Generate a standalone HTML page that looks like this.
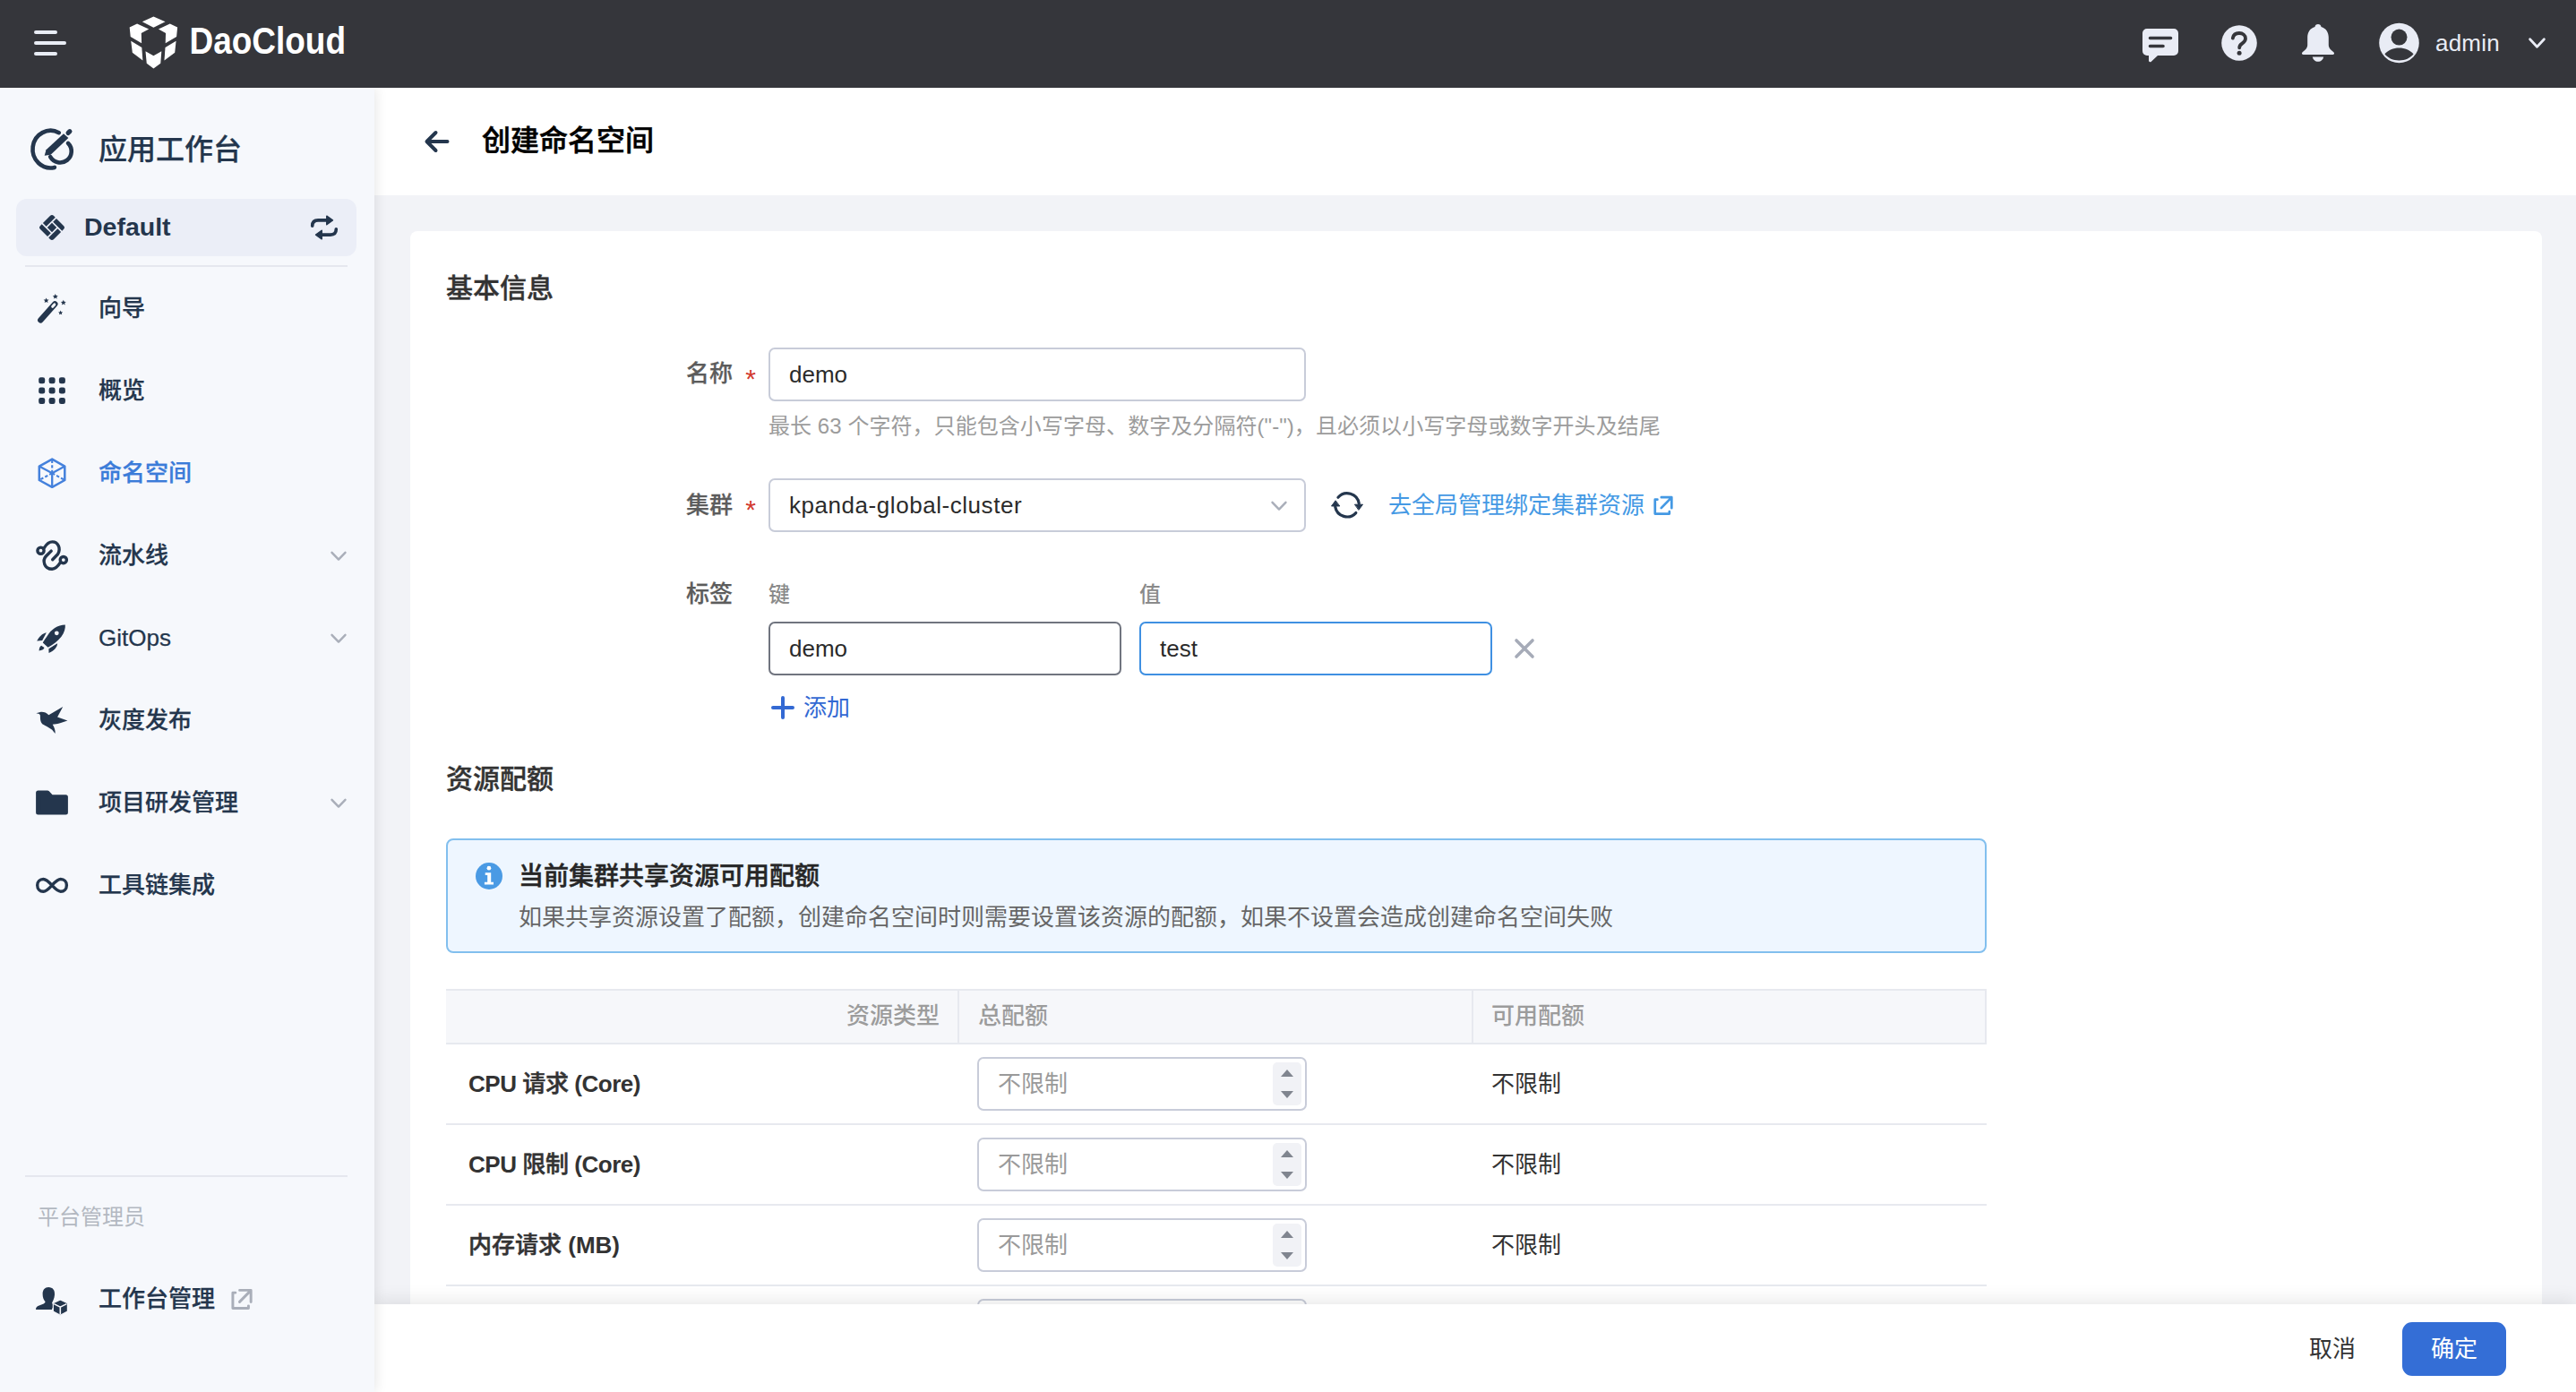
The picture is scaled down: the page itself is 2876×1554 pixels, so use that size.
<!DOCTYPE html>
<html lang="zh-CN">
<head>
<meta charset="utf-8">
<title>创建命名空间 - 应用工作台</title>
<style>
*{box-sizing:border-box;margin:0;padding:0}
html,body{width:2876px;height:1554px;overflow:hidden;background:#f2f3f7}
body{position:relative;font-family:"Liberation Sans","Noto Sans CJK SC",sans-serif;font-size:26px;color:#333;-webkit-font-smoothing:antialiased}
.abs{position:absolute}
.t{position:absolute;white-space:nowrap;line-height:40px;height:40px}
svg{position:absolute;overflow:visible}

/* header */
#hd{position:absolute;left:0;top:0;width:2876px;height:98px;background:#35363b}
#hd .bar{position:absolute;height:4px;border-radius:2px;background:#e9edf5;left:38px}

/* sidebar */
#sb{position:absolute;left:0;top:98px;width:418px;height:1456px;background:#f6f8fc;box-shadow:0 0 14px rgba(0,0,0,.12)}
#sb .nav{color:#24364d;font-weight:500;font-size:26px;left:110px;-webkit-text-stroke-width:.25px}
#sb .sep{position:absolute;left:28px;width:360px;height:2px;background:#e5e7ee}
#ws{position:absolute;left:18px;top:124px;width:380px;height:64px;border-radius:12px;background:#ebeef7}

/* main */
#ph{position:absolute;left:418px;top:98px;width:2458px;height:120px;background:#fff}
#card{position:absolute;left:458px;top:258px;width:2380px;height:1400px;background:#fff;border-radius:8px}
.inp{position:absolute;height:60px;border:2px solid #c8ccd9;border-radius:7px;background:#fff}
.inp .v{position:absolute;left:21px;top:8px;line-height:40px;font-size:26px;color:#2b2b2b;white-space:nowrap}
.lbl{font-weight:500;color:#5c5c5c;font-size:26px;-webkit-text-stroke-width:.25px}
.star{position:absolute;color:#d23a2f;font-size:30px;line-height:40px;width:12px;text-align:center}
.inp .ph{color:#9a9a9a}
.th{font-size:26px;font-weight:500;color:#9c9c9c}
.rowline{position:absolute;left:498px;width:1720px;height:2px;background:#e7e9ef}
.spin{position:absolute;right:4px;top:4px;width:32px;height:48px;border-radius:5px;background:#f1f2f6}
.spin i{position:absolute;left:8.700px;width:0;height:0;border-left:7.300px solid transparent;border-right:7.300px solid transparent}
.spin i.u{top:8px;border-bottom:8px solid #80858f}
.spin i.d{top:32px;border-top:8px solid #80858f}
.rl{font-weight:700;color:#333;font-size:26px;left:523px}
.rl.c{letter-spacing:-.45px}
.cj{font-weight:500;-webkit-text-stroke:.5px #333}

#ft{position:absolute;left:418px;top:1456px;width:2458px;height:98px;background:#fff;box-shadow:0 -5px 18px rgba(0,0,0,.085)}
</style>
</head>
<body>

<!-- ================= MAIN ================= -->
<div id="ph"></div>
<div id="card"></div>
<div id="main">
<svg style="left:474px;top:145px" width="28" height="26" viewBox="0 0 28 26" fill="none" stroke="#24364d" stroke-width="4" stroke-linecap="round" stroke-linejoin="round"><path d="M25.500 13H3.500M12.500 3l-10 10 10 10"/></svg>
<div class="t " style="left:538px;top:133px;line-height:48px;height:48px;font-size:32px;font-weight:500;-webkit-text-stroke:.55px #000;color:#000">创建命名空间</div>
<div class="t " style="left:498px;top:300px;line-height:44px;height:44px;font-size:30px;font-weight:500;-webkit-text-stroke-width:.4px;color:#333">基本信息</div>
<div class="t lbl" style="right:2058px;top:397px;line-height:40px;height:40px;">名称</div>
<div class="star" style="left:832px;top:403px">*</div>
<div class="inp" style="left:858px;top:388px;width:600px"><span class="v">demo</span></div>
<div class="t " style="left:858px;top:456px;line-height:40px;height:40px;font-size:24px;letter-spacing:.06px;color:#9c9c9c">最长 63 个字符，只能包含小写字母、数字及分隔符("-")，且必须以小写字母或数字开头及结尾</div>
<div class="t lbl" style="right:2058px;top:543.5px;line-height:40px;height:40px;">集群</div>
<div class="star" style="left:832px;top:549px">*</div>
<div class="inp" style="left:858px;top:534px;width:600px"><span class="v" style="letter-spacing:.55px">kpanda-global-cluster</span><svg style="left:559px;top:23px" width="18" height="12" viewBox="0 0 18 12"><path fill="none" stroke="#a9aeb9" stroke-width="2.400" stroke-linecap="round" stroke-linejoin="round" d="M1.500 1.800l7.500 7.800 7.500-7.800"/></svg></div>
<svg style="left:1484px;top:544px" width="40" height="40" viewBox="-20 -20 40 40" fill="none" stroke="#24364d" stroke-width="3.200" stroke-linecap="round">
<path d="M-10.060 -8.800A13.400 13.400 0 0 1 13.250 -1.900"/><path d="M9.800 8.550A13.400 13.400 0 0 1 -13.250 1.900"/>
<path fill="#24364d" stroke="#24364d" stroke-width="1" stroke-linejoin="round" d="M8.800 -.8h8.700L13.100 5.100z"/><path fill="#24364d" stroke="#24364d" stroke-width="1" stroke-linejoin="round" d="M-8.600 1h-8.900L-13.100 -4.900z"/></svg>
<div class="t " style="left:1550px;top:543.5px;line-height:40px;height:40px;color:#4499e4">去全局管理绑定集群资源</div>
<svg style="left:1846px;top:553px" width="22" height="22" viewBox="0 0 22 22" fill="none" stroke="#4499e4" stroke-width="2.700" stroke-linecap="round" stroke-linejoin="round"><path d="M4.400 4.700H1.750V20.600H17.800V18.200"/><path d="M8.700 14.100L20.200 2.400M8.800 2.200H20.300V14.200"/></svg>
<div class="t lbl" style="right:2058px;top:643px;line-height:40px;height:40px;">标签</div>
<div class="t " style="left:858px;top:644px;line-height:40px;height:40px;font-size:24px;font-weight:500;color:#8a8a8a">键</div>
<div class="t " style="left:1272px;top:644px;line-height:40px;height:40px;font-size:24px;font-weight:500;color:#8a8a8a">值</div>
<div class="inp" style="left:858px;top:694px;width:394px;border-color:#70747f"><span class="v">demo</span></div>
<div class="inp" style="left:1272px;top:694px;width:394px;border-color:#3f90e2"><span class="v">test</span></div>
<svg style="left:1691px;top:713px" width="22" height="22" viewBox="0 0 22 22"><path d="M2 2l18 18M20 2L2 20" stroke="#a6abb8" stroke-width="3.600" stroke-linecap="round"/></svg>
<svg style="left:861px;top:777px" width="26" height="26" viewBox="0 0 26 26"><path d="M13 2v22M2 13h22" stroke="#3369d3" stroke-width="4" stroke-linecap="round"/></svg>
<div class="t " style="left:897px;top:770px;line-height:40px;height:40px;color:#3369d3">添加</div>
<div class="t " style="left:498px;top:848px;line-height:44px;height:44px;font-size:30px;font-weight:500;-webkit-text-stroke-width:.4px;color:#333">资源配额</div>
<div class="abs" style="left:498px;top:936px;width:1720px;height:128px;border:2px solid #82bfee;border-radius:8px;background:#eef6ff"></div>
<svg style="left:531px;top:963px" width="30" height="30" viewBox="0 0 30 30"><circle cx="15" cy="15" r="15" fill="#4a9ae4"/><circle cx="14.900" cy="6.200" r="2.350" fill="#fff"/><path d="M10.700 11.200h6.500v10.500h2.800v2.700H9.900v-2.700h3.300v-7.800h-2.500z" fill="#fff"/></svg>
<div class="t " style="left:579px;top:957.5px;line-height:42px;height:42px;font-size:28px;font-weight:500;-webkit-text-stroke:.5px #262626;color:#262626">当前集群共享资源可用配额</div>
<div class="t " style="left:579px;top:1003.5px;line-height:40px;height:40px;color:#666">如果共享资源设置了配额，创建命名空间时则需要设置该资源的配额，如果不设置会造成创建命名空间失败</div>
<div class="abs" style="left:498px;top:1104px;width:1720px;height:62px;background:#f6f7fa;border-top:2px solid #e7e9ef;border-bottom:2px solid #e7e9ef;border-right:2px solid #e7e9ef"></div>
<div class="abs" style="left:1069px;top:1106px;width:2px;height:58px;background:#e7e9ef"></div>
<div class="abs" style="left:1643px;top:1106px;width:2px;height:58px;background:#e7e9ef"></div>
<div class="t th" style="right:1827px;top:1114px;line-height:40px;height:40px;">资源类型</div>
<div class="t th" style="left:1092px;top:1114px;line-height:40px;height:40px;">总配额</div>
<div class="t th" style="left:1665px;top:1114px;line-height:40px;height:40px;">可用配额</div>
<div class="t rl c" style="left:523px;top:1190px;line-height:40px;height:40px;">CPU <span class="cj">请求</span> (Core)</div>
<div class="inp" style="left:1091px;top:1180px;width:368px"><span class="v ph">不限制</span><div class="spin"><i class="u"></i><i class="d"></i></div></div>
<div class="t " style="left:1665px;top:1190px;line-height:40px;height:40px;color:#333">不限制</div>
<div class="rowline" style="top:1254px"></div>
<div class="t rl c" style="left:523px;top:1280px;line-height:40px;height:40px;">CPU <span class="cj">限制</span> (Core)</div>
<div class="inp" style="left:1091px;top:1270px;width:368px"><span class="v ph">不限制</span><div class="spin"><i class="u"></i><i class="d"></i></div></div>
<div class="t " style="left:1665px;top:1280px;line-height:40px;height:40px;color:#333">不限制</div>
<div class="rowline" style="top:1344px"></div>
<div class="t rl" style="left:523px;top:1370px;line-height:40px;height:40px;"><span class="cj">内存请求</span> (MB)</div>
<div class="inp" style="left:1091px;top:1360px;width:368px"><span class="v ph">不限制</span><div class="spin"><i class="u"></i><i class="d"></i></div></div>
<div class="t " style="left:1665px;top:1370px;line-height:40px;height:40px;color:#333">不限制</div>
<div class="rowline" style="top:1434px"></div>
<div class="t rl" style="left:523px;top:1460px;line-height:40px;height:40px;"><span class="cj">内存限制</span> (MB)</div>
<div class="inp" style="left:1091px;top:1450px;width:368px"><span class="v ph">不限制</span><div class="spin"><i class="u"></i><i class="d"></i></div></div>
<div class="t " style="left:1665px;top:1460px;line-height:40px;height:40px;color:#333">不限制</div>
<div class="rowline" style="top:1524px"></div>
</div>
<div id="ft">
  <div class="t" style="left:2160px;top:30px;color:#333">取消</div>
  <div class="abs" style="left:2264px;top:20px;width:116px;height:60px;border-radius:11px;background:#346ed6"></div>
  <div class="t" style="left:2264px;top:30px;width:116px;text-align:center;color:#fff">确定</div>
</div>

<!-- ================= SIDEBAR ================= -->
<div id="sb">
  <!-- title icon -->
  <svg style="left:34px;top:46px" width="48" height="48" viewBox="0 0 48 48" fill="none" stroke="#24364d" stroke-width="4.600" stroke-linecap="round">
    <path d="M31.800 4.200A20 20.800 0 1 0 26.900 42.900"/>
    <path d="M42 15.900A12.600 12.600 0 1 1 22.200 31.100"/>
    <path stroke="none" fill="#24364d" d="M37 5.200L17.500 23.200 15.700 29.700 22.600 28.700 42.400 10z"/>
    <path stroke-width="5.200" d="M42.100 4.400L43.900 2.700"/>
  </svg>
  <div class="t" style="left:110px;top:45px;font-size:32px;font-weight:500;-webkit-text-stroke-width:.25px;color:#24364d;line-height:48px;height:48px">应用工作台</div>
  <div id="ws">
    <svg style="left:25px;top:17px" width="30" height="30" viewBox="-15 -15 30 30"><g transform="scale(-1 1) rotate(45)" fill="#24364d">
      <path d="M-10.650 -7.650a3 3 0 0 1 3-3H3.650v5.300H-10.650z"/>
      <path d="M7.650 -10.650a3 3 0 0 1 3 3V3.650H5.350V-10.650z"/>
      <path d="M10.650 7.650a3 3 0 0 1-3 3H-3.650V5.350H10.650z"/>
      <path d="M-7.650 10.650a3 3 0 0 1-3-3V-3.650h5.300V10.650z"/>
      <rect x="-3.650" y="-3.650" width="7.300" height="7.300"/>
    </g></svg>
    <div class="t" style="left:76px;top:11px;font-size:28.500px;font-weight:700;color:#24364d">Default</div>
    <svg style="left:328px;top:18px" width="32" height="28" viewBox="0 0 32 28" fill="none" stroke="#24364d" stroke-width="3.600" stroke-linecap="round" stroke-linejoin="round">
      <path d="M2.700 12.200c0-4.200 2.200-6.300 6.400-6.300h10"/>
      <path fill="#24364d" stroke-width="1.500" d="M18.800 1.200l6.600 4.700-6.600 4.800z"/>
      <path d="M29.300 15.800c0 4.200-2.200 6.300-6.400 6.300h-10"/>
      <path fill="#24364d" stroke-width="1.500" d="M13.200 17.300l-6.600 4.800 6.600 4.700z"/>
    </svg>
  </div>
  <div class="sep" style="top:198px"></div>
  <div class="t nav" style="top:226px;color:#24364d">向导</div>
  <div class="t nav" style="top:318px;color:#24364d">概览</div>
  <div class="t nav" style="top:410px;color:#3b7cd9">命名空间</div>
  <div class="t nav" style="top:502px;color:#24364d">流水线</div>
  <div class="t nav" style="top:594px;color:#24364d">GitOps</div>
  <div class="t nav" style="top:686px;color:#24364d">灰度发布</div>
  <div class="t nav" style="top:778px;color:#24364d">项目研发管理</div>
  <div class="t nav" style="top:870px;color:#24364d">工具链集成</div>
  <svg style="left:369px;top:517px" width="18" height="12" viewBox="0 0 18 12"><path fill="none" stroke="#a9aeb9" stroke-width="2.400" stroke-linecap="round" stroke-linejoin="round" d="M1.500 1.800l7.500 7.800 7.500-7.800"/></svg>
  <svg style="left:369px;top:609px" width="18" height="12" viewBox="0 0 18 12"><path fill="none" stroke="#a9aeb9" stroke-width="2.400" stroke-linecap="round" stroke-linejoin="round" d="M1.500 1.800l7.500 7.800 7.500-7.800"/></svg>
  <svg style="left:369px;top:793px" width="18" height="12" viewBox="0 0 18 12"><path fill="none" stroke="#a9aeb9" stroke-width="2.400" stroke-linecap="round" stroke-linejoin="round" d="M1.500 1.800l7.500 7.800 7.500-7.800"/></svg>
  <svg style="left:0;top:0" width="100" height="1000" viewBox="0 98 100 1000">
    <path d="M45.3 357.4 L61.3 339.3" stroke="#24364d" stroke-width="6.400" stroke-linecap="round"/>
    <path d="M58.7 342.3 L60.8 339.9" stroke="#f6f7fb" stroke-width="3" stroke-linecap="round"/>
    <path transform="translate(51.6 335.5) scale(1.00)" d="M0 -3.100L.9 -1 3 -.9 1.400 .5 1.900 2.600 0 1.500 -1.900 2.600 -1.400 .5 -3 -.9 -.9 -1z" fill="#24364d"/>
    <path transform="translate(61.8 331.0) scale(1.00)" d="M0 -3.100L.9 -1 3 -.9 1.400 .5 1.900 2.600 0 1.500 -1.900 2.600 -1.400 .5 -3 -.9 -.9 -1z" fill="#24364d"/>
    <path transform="translate(70.8 337.8) scale(1.00)" d="M0 -3.100L.9 -1 3 -.9 1.400 .5 1.900 2.600 0 1.500 -1.900 2.600 -1.400 .5 -3 -.9 -.9 -1z" fill="#24364d"/>
    <path transform="translate(67.6 349.1) scale(0.85)" d="M0 -3.100L.9 -1 3 -.9 1.400 .5 1.900 2.600 0 1.500 -1.900 2.600 -1.400 .5 -3 -.9 -.9 -1z" fill="#24364d"/>
    <rect x="43.2" y="421.3" width="7" height="7" rx="2.300" fill="#24364d"/>
    <rect x="54.6" y="421.3" width="7" height="7" rx="2.300" fill="#24364d"/>
    <rect x="65.9" y="421.3" width="7" height="7" rx="2.300" fill="#24364d"/>
    <rect x="43.2" y="432.6" width="7" height="7" rx="2.300" fill="#24364d"/>
    <rect x="54.6" y="432.6" width="7" height="7" rx="2.300" fill="#24364d"/>
    <rect x="65.9" y="432.6" width="7" height="7" rx="2.300" fill="#24364d"/>
    <rect x="43.2" y="444.0" width="7" height="7" rx="2.300" fill="#24364d"/>
    <rect x="54.6" y="444.0" width="7" height="7" rx="2.300" fill="#24364d"/>
    <rect x="65.9" y="444.0" width="7" height="7" rx="2.300" fill="#24364d"/>
    <path d="M58.2 512.6 L72.3 520.6 L72.3 536.0 L58.2 543.8 L43.8 536.0 L43.8 520.6 Z" fill="none" stroke="#4481dc" stroke-width="2.500" stroke-linejoin="round"/>
    <path d="M43.8 520.6 L58.2 528.2 L72.3 520.6 M58.2 528.2 L58.2 543.8" stroke="#4481dc" stroke-width="2.300" fill="none"/>
    <path d="M58.2 528.2 L58.2 512.6 M58.2 528.2 L43.8 536.0 M58.2 528.2 L72.3 536.0" stroke="#4481dc" stroke-width="2.100" stroke-dasharray="3.400 2.200" fill="none"/>
    <circle cx="45.5" cy="614.7" r="3.600" fill="none" stroke="#24364d" stroke-width="3.400"/>
    <circle cx="70.8" cy="625.1" r="3.600" fill="none" stroke="#24364d" stroke-width="3.400"/>
    <path d="M49.3 611.6 C52.4 606.7 55.9 604.9 58.5 604.9 C64.5 604.9 68.5 611.8 64.5 618.7 L58.7 624.7" fill="none" stroke="#24364d" stroke-width="3.400" stroke-linecap="round"/>
    <path d="M57.2 615.1 L51.3 621.0 C47.2 625.6 49.0 635.1 58.2 635.3 C61.6 635.1 64.5 632.5 67.4 627.9" fill="none" stroke="#24364d" stroke-width="3.400" stroke-linecap="round"/>
    <path fill="#24364d" d="M72.8 697.5 C64.5 697.8 57.0 702.4 52.4 710.5 C50.1 713.9 48.4 716.2 47.8 717.4 L53.6 722.8 C59.3 719.7 64.5 715.6 68.5 710.8 C72.0 705.9 73.1 701.3 72.8 697.5 Z"/>
    <circle cx="63.3" cy="706.8" r="2.400" fill="#f6f7fb"/>
    <path fill="#24364d" d="M51.8 706.2 C47.2 707.0 43.8 711.0 41.1 715.6 L47.2 715.1 Z"/>
    <path fill="#24364d" d="M64.1 718.3 C63.9 723.1 60.1 726.6 54.5 728.9 L54.4 724.3 Z"/>
    <path fill="#24364d" d="M46.1 720.8 C43.8 722.5 43.8 724.8 43.6 726.6 C46.1 726.2 49.0 725.4 49.5 723.1 Z"/>
    <path fill="#24364d" d="M40.3 796.3 L44.9 794.9 C48.4 794.4 51.8 795.5 54.4 798.2 L70.2 789.0 L64.1 800.5 L75.4 804.5 L67.9 807.0 C64.5 808.2 61.0 808.5 58.7 808.7 C60.8 812.2 62.0 815.6 61.6 819.1 L58.2 814.7 C54.7 812.2 50.7 809.9 47.2 808.2 C44.9 805.9 44.9 802.4 44.9 799.5 C44.9 797.8 44.7 797.0 40.3 796.3 Z"/>
    <path fill="#24364d" stroke="#24364d" stroke-width="5" stroke-linejoin="round" d="M42.6 885.1 L53.0 885.1 L57.4 889.7 L73.4 889.7 L73.4 907.1 L42.6 907.1 Z"/>
    <path fill="none" stroke="#24364d" stroke-width="3.400" d="M58.0 988.3 C54.7 984.7 51.8 981.5 48.4 981.5 C44.4 981.5 41.7 984.5 41.7 988.3 C41.7 992.2 44.4 995.2 48.4 995.2 C51.8 995.2 54.7 992.0 58.0 988.3 C61.4 984.7 64.3 981.5 67.7 981.5 C71.7 981.5 74.4 984.5 74.4 988.3 C74.4 992.2 71.7 995.2 67.7 995.2 C64.3 995.2 61.4 992.0 58.0 988.3 Z"/>
  </svg>
  <svg style="left:0;top:1300px" width="100" height="120" viewBox="0 1398 100 120">
    <path fill="#24364d" d="M54.1 1436.9 C59.1 1436.9 61.4 1440.4 61.0 1445.4 C60.6 1449.7 59.1 1452.2 58.1 1454.2 C58.5 1456.2 60.0 1456.8 62.6 1457.8 L58.1 1460.7 L58.1 1462.1 L40.0 1462.1 C40.0 1459.1 41.3 1458.1 44.3 1457.2 C48.2 1455.8 50.2 1455.2 50.6 1453.2 C48.6 1450.9 47.6 1448.3 47.6 1444.4 C47.6 1439.8 50.2 1436.9 54.1 1436.9 Z"/>
    <path fill="#24364d" stroke="#f6f7fb" stroke-width="1.200" d="M67.3 1450.9 L75.4 1454.8 L75.4 1464.1 L67.3 1468.4 L59.3 1464.1 L59.3 1454.8 Z"/>
    <path fill="none" stroke="#f6f7fb" stroke-width="1.600" d="M60.2 1455.6 L67.3 1459.1 L74.4 1455.6 M67.3 1459.1 L67.3 1467.4"/>
  </svg>
  <div class="sep" style="top:1214px"></div>
  <div class="t" style="left:42px;top:1240.500px;font-size:24px;color:#b3b8c1">平台管理员</div>
  <div class="t nav" style="top:1332px">工作台管理</div>
  <svg style="left:258px;top:1340px" width="24" height="24" viewBox="0 0 22 22" fill="none" stroke="#a9aeb9" stroke-width="2.700" stroke-linecap="round" stroke-linejoin="round"><path d="M4.400 4.700H1.750V20.600H17.800V18.200"/><path d="M8.700 14.100L20.200 2.400M8.800 2.200H20.300V14.200"/></svg>
</div>

<!-- ================= HEADER ================= -->
<div id="hd">
  <div class="bar" style="top:34px;width:26px"></div>
  <div class="bar" style="top:46px;width:36px"></div>
  <div class="bar" style="top:58px;width:26px"></div>
  <!-- logo cube -->
  <svg style="left:130px;top:10px" width="70" height="70" viewBox="0 0 667.8 667.8">
    <g fill="#fff">
      <polygon points="275,135 395,80 520,135 395,198"/>
      <polygon points="140,195 220,158 345,215 265,258 268,365 150,295"/>
      <polygon points="650,195 570,158 448,215 525,258 522,365 640,295"/>
      <polygon points="155,340 270,410 280,548 170,465"/>
      <polygon points="635,340 520,410 510,548 622,465"/>
      <polygon points="310,450 395,498 480,450 470,580 395,635 322,580"/>
    </g>
  </svg>
  <svg style="left:0;top:0" width="420" height="98"><text x="211.500" y="60.3" font-family="Liberation Sans, sans-serif" font-weight="700" font-size="43" fill="#fff" textLength="174.500" lengthAdjust="spacingAndGlyphs">DaoCloud</text></svg>
  <!-- chat -->
  <svg style="left:2392px;top:32px" width="40" height="38" viewBox="0 0 40 38">
    <path fill="#e9ecf5" d="M5 0h30a5 5 0 0 1 5 5v20a5 5 0 0 1-5 5H17l-7.2 6.8C8.6 37.9 7 37.2 7 35.6V30H5a5 5 0 0 1-5-5V5a5 5 0 0 1 5-5z"/>
    <path stroke="#35363b" stroke-width="3.6" stroke-linecap="round" d="M8.5 10.5h23M8.5 19.5h14.5"/>
  </svg>
  <!-- help -->
  <svg style="left:2480px;top:28px" width="40" height="40" viewBox="0 0 40 40">
    <circle cx="20" cy="20" r="19.8" fill="#e9ecf5"/>
    <path fill="none" stroke="#35363b" stroke-width="3.8" stroke-linecap="round" stroke-linejoin="round" d="M12.8 14.6c.6-3.4 3.400-5.600 7.200-5.600 4 0 7 2.400 7 5.900 0 2.800-1.700 4.200-3.800 5.700-1.900 1.300-3 2.500-3 4.700"/>
    <circle cx="20.100" cy="31.200" r="2.500" fill="#35363b"/>
  </svg>
  <!-- bell -->
  <svg style="left:2569px;top:27px" width="38" height="42" viewBox="0 0 38 42">
    <path fill="#e9ecf5" d="M19 0c1.900 0 3.300 1.300 3.500 3 5.300 1.500 8.300 6 8.300 11.800v8.400c0 2.200 1 4 3 5.700l2.600 2.300c1.300 1.200.6 2.800-1.100 2.800H2.700c-1.700 0-2.400-1.600-1.100-2.800l2.600-2.300c2-1.700 3-3.500 3-5.700v-8.400C7.200 9 10.200 4.500 15.500 3 15.700 1.300 17.100 0 19 0z"/>
    <path fill="#e9ecf5" d="M12.800 36.400h12.400c-.6 3.100-3 5.300-6.200 5.300s-5.600-2.200-6.200-5.300z"/>
  </svg>
  <!-- avatar -->
  <svg style="left:2656px;top:25px" width="45" height="46" viewBox="0 0 46 46">
    <circle cx="23" cy="23" r="22.800" fill="#e9ecf5"/>
    <circle cx="23" cy="16.400" r="9.200" fill="#35363b"/>
    <path fill="#35363b" d="M6.600 35.600C10.500 31 16.400 28.600 23 28.600s12.500 2.400 16.400 7C35.700 40.400 29.800 43 23 43S10.300 40.400 6.600 35.600z"/>
  </svg>
  <div class="t" style="left:2719px;top:28px;font-size:26px;color:#e9ecf5;letter-spacing:.2px">admin</div>
  <svg style="left:2823px;top:42px" width="19" height="13" viewBox="0 0 19 13"><path fill="none" stroke="#e9ecf5" stroke-width="2.800" stroke-linecap="round" stroke-linejoin="round" d="M1.600 1.800l7.900 8.400 7.900-8.400"/></svg>
</div>

</body>
</html>
